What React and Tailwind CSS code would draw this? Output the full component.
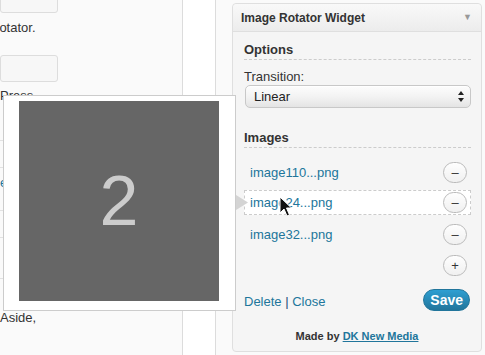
const font = { fontFamily: '"Liberation Sans", Arial, sans-serif' };

// MINUS / PLUS ROUND BUTTON
const RoundBtn = ({ plus }) => (
  <div className="w-[24px] h-[21px] rounded-full border border-[#bbb] bg-gradient-to-b from-[#fefefe] to-[#f0f0f0] flex items-center justify-center text-[#333] text-[13px] leading-none">
    {plus ? '+' : '–'}
  </div>
);

const ImageRow = ({ name, active }) => (
  <div
    className={`flex items-center justify-between h-[25px] pl-[5px] pr-[3px] ${
      active ? 'border border-dashed border-[#ccc] bg-white' : 'border border-transparent'
    }`}
  >
    <span className="text-[13px] text-[#21759b]">{name}</span>
    <RoundBtn />
  </div>
);

const App = () => {
  return (
    <div className="w-[485px] h-[355px] overflow-hidden bg-[#fafafa] flex relative" style={font}>
      {/* LEFT BACKGROUND */}
      <div className="w-[232px] flex shrink-0 relative">
        <div className="w-[183px] border-r border-[#dcdcdc] text-[13px] text-[#333] overflow-hidden">
          <div className="-mt-[12px] w-[58px] h-[25px] rounded-[3px] border border-[#ddd] bg-[#f7f7f7]" />
          <p className="mt-[7px] -ml-[10px] leading-[16px]">Rotator.</p>
          <div className="mt-[19px] w-[58px] h-[27px] rounded-[3px] border border-[#ddd] bg-[#f7f7f7]" />
          <p className="mt-[6px] leading-[16px]">Press</p>
          <div className="mt-[36px] border-t border-[#e2e2e2] h-[27px]" />
          <div className="border-t border-[#e2e2e2] h-[43px] pt-[5px] text-[#21759b]">e</div>
          <div className="border-t border-[#e2e2e2] h-[27px]" />
          <div className="border-t border-[#e2e2e2] h-[41px]" />
          <div className="border-t border-[#e2e2e2] h-[32px]" />
          <p className="leading-[16px]">Aside,</p>
        </div>
        <div className="w-[33px] border-r border-[#dcdcdc] bg-white" />
        <div className="flex-1" />

        {/* IMAGE PREVIEW POPUP */}
        <div className="absolute left-[3px] top-[95px] w-[233px] h-[216px] bg-white border border-[#ccc] pl-[15px] pt-[5px] z-10">
          <div className="w-[200px] h-[200px] bg-[#666] flex items-center justify-center">
            <span className="text-[#ccc] text-[70px] leading-none">2</span>
          </div>
        </div>
        <svg className="absolute left-[236px] top-[195px] z-10" width="12" height="15" viewBox="0 0 12 15">
          <path d="M0 0 L12 7.5 L0 15 Z" fill="#d4d4d4" />
        </svg>
      </div>

      {/* WIDGET */}
      <div className="mt-[3px] w-[250px] h-[349px] shrink-0 border border-[#dfdfdf] rounded-[4px] bg-[#f5f5f5] flex flex-col">
        <div className="h-[28px] shrink-0 border-b border-[#dfdfdf] rounded-t-[4px] bg-gradient-to-b from-[#f9f9f9] to-[#ececec] flex items-center justify-between pl-[8px] pr-[9px]">
          <span className="text-[12px] font-bold text-[#333]">Image Rotator Widget</span>
          <span className="text-[9px] text-[#999]">▼</span>
        </div>

        <div className="pl-[11px] pr-[10px] pt-[10px] flex flex-col">
          <div className="text-[13px] font-bold text-[#333] leading-[16px] pb-[1px] border-b border-dashed border-[#ccc]">
            Options
          </div>
          <div className="mt-[9px] text-[13px] text-[#333] leading-[16px]">Transition:</div>
          <div className="mt-0 ml-[1px] h-[23px] rounded-[5px] border border-[#c8c8c8] bg-gradient-to-b from-[#fdfdfd] via-[#f3f3f3] to-[#e4e4e4] flex items-center justify-between pl-[8px] pr-[6px] shadow-[inset_0_1px_0_#fff]">
            <span className="text-[13px] text-[#222]">Linear</span>
            <svg width="6" height="11" viewBox="0 0 6 11">
              <path d="M0 4 L3 0 L6 4 Z M0 7 L3 11 L6 7 Z" fill="#222" />
            </svg>
          </div>

          <div className="mt-[22px] text-[13px] font-bold text-[#333] leading-[16px] pb-[1px] border-b border-dashed border-[#ccc]">
            Images
          </div>

          <div className="mt-[12px] flex flex-col">
            <ImageRow name="image110...png" />
            <div className="mt-[5px]">
              <ImageRow name="image24...png" active />
            </div>
            <div className="mt-[7px]">
              <ImageRow name="image32...png" />
            </div>
            <div className="flex justify-end pr-[4px] mt-[8px]">
              <RoundBtn plus />
            </div>
          </div>

          <div className="mt-[13px] flex items-center justify-between pr-[1px]">
            <div className="text-[13px] text-[#21759b] mt-[3px]">
              Delete <span className="text-[#264d7a]">|</span> Close
            </div>
            <div className="h-[22px] px-[6px] rounded-full bg-gradient-to-b from-[#2e9fd2] to-[#21759b] border border-[#21759b] text-white text-[14px] font-bold flex items-center">
              Save
            </div>
          </div>
        </div>

        <div className="mt-[16px] text-center text-[11px] font-bold text-[#333]">
          Made by <span className="text-[#21759b] underline">DK New Media</span>
        </div>
      </div>

      {/* CURSOR */}
      <svg className="absolute left-[279px] top-[196px] z-20" width="13" height="21" viewBox="0 0 13 21">
        <path
          d="M1 1 L1 17 L5 13 L8 20 L10.5 19 L7.5 12 L12.5 12 Z"
          fill="#111"
          stroke="#fff"
          strokeWidth="1"
          strokeLinejoin="round"
        />
      </svg>
    </div>
  );
};

export default App;
